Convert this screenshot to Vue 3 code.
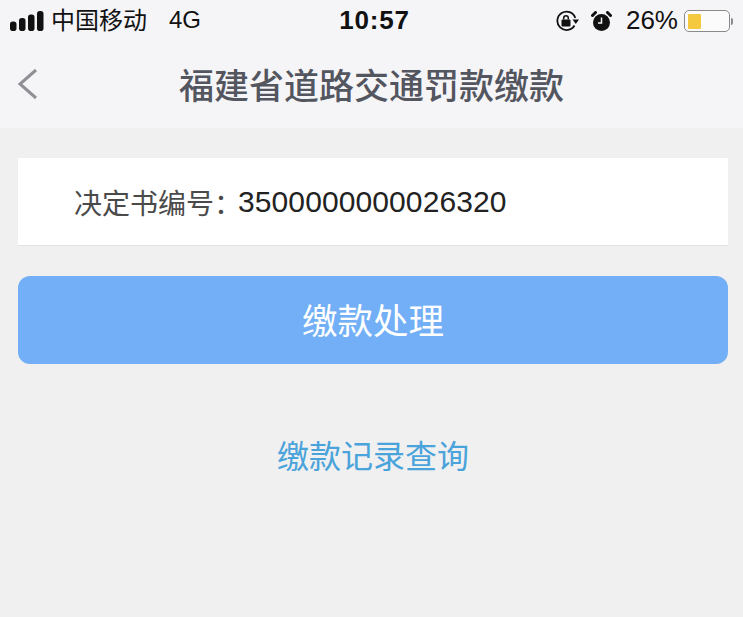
<template>
  <div class="page">
    <header class="top">
      <div class="status">
        <div class="status-left">
          <svg class="signal" width="34" height="20" viewBox="0 0 34 20">
            <rect x="0" y="10.500" width="6.500" height="9.500" rx="2.800" fill="#111" />
            <rect x="9" y="7" width="6.500" height="13" rx="2.800" fill="#111" />
            <rect x="18" y="3.500" width="6.500" height="16.500" rx="2.800" fill="#111" />
            <rect x="27" y="0" width="6.500" height="20" rx="2.800" fill="#111" />
          </svg>
          <span class="carrier">中国移动</span>
          <span class="net">4G</span>
        </div>
        <div class="clock">10:57</div>
        <div class="status-right">
          <svg class="lock" width="24" height="22" viewBox="0 0 24 22">
            <path d="M18.500 15.500A9.200 9.200 0 1 1 19.300 8" fill="none" stroke="#111" stroke-width="1.800" />
            <path d="M16.500 9.500h6.500l-3.200 4.500z" fill="#111" />
            <rect x="5.500" y="9.500" width="9" height="7" rx="1" fill="#111" />
            <path d="M7.700 9.500V8a2.300 2.300 0 0 1 4.600 0v1.500" fill="none" stroke="#111" stroke-width="1.500" />
          </svg>
          <svg class="alarm" width="21" height="21" viewBox="0 0 21 21">
            <circle cx="10.500" cy="11.500" r="8.500" fill="#111" />
            <path d="M10.500 6.500v5.500H7" fill="none" stroke="#f5f5f8" stroke-width="1.500" />
            <path d="M1.500 4.500 4.500 1.500M19.500 4.500 16.500 1.500" stroke="#111" stroke-width="3" stroke-linecap="round" />
          </svg>
          <span class="pct">26%</span>
          <div class="battery">
            <div class="battery-body"><div class="battery-fill"></div></div>
            <div class="battery-tip"></div>
          </div>
        </div>
      </div>
      <div class="nav">
        <svg class="back" width="22" height="32" viewBox="0 0 22 32">
          <path d="M19 2 3 16l16 14" fill="none" stroke="#8f9094" stroke-width="3" />
        </svg>
        <h1 class="title">福建省道路交通罚款缴款</h1>
      </div>
    </header>
    <main class="content">
      <div class="field">
        <span class="label">决定书编号：</span><span class="value">3500000000026320</span>
      </div>
      <button class="pay">缴款处理</button>
      <a class="records">缴款记录查询</a>
    </main>
  </div>
</template>

<script setup>
</script>

<style>
html, body { margin: 0; background: #efeff0; }
</style>

<style scoped>
.page {
  width: 743px;
  height: 617px;
  overflow: hidden;
  background: #f0f0f1;
  font-family: "Liberation Sans", "Noto Sans CJK SC", sans-serif;
}
.top { height: 128px; background: #f5f5f8; }
.status {
  height: 42px;
  display: grid;
  grid-template-columns: 1fr auto 1fr;
  align-items: center;
  color: #111;
}
.status-left { display: flex; align-items: center; padding-left: 10px; }
.signal { margin-right: 7px; }
.carrier { font-size: 24px; line-height: 38px; }
.net { font-size: 24px; margin-left: 22px; padding-bottom: 2px; }
.clock { font-size: 26px; font-weight: 700; letter-spacing: 0.8px; margin-left: 6px; padding-bottom: 2px; }
.status-right { display: flex; align-items: center; justify-content: flex-end; padding-right: 10px; }
.lock { margin-right: 11px; }
.alarm { margin-right: 14px; }
.pct { font-size: 26px; margin-right: 6px; padding-bottom: 2px; }
.battery { display: flex; align-items: center; }
.battery-body {
  width: 46px;
  height: 22px;
  box-sizing: border-box;
  border: 1.5px solid #8a8a8a;
  border-radius: 5px;
  padding: 2.500px;
  background: #fbfbfb;
}
.battery-fill { width: 13px; height: 100%; background: #f5c93f; border-radius: 1px; }
.battery-tip { width: 2px; height: 7px; background: #8a8a8a; border-radius: 0 2px 2px 0; margin-left: 1px; }
.nav {
  height: 86px;
  box-sizing: border-box;
  padding-bottom: 4px;
  display: flex;
  align-items: center;
  justify-content: center;
  position: relative;
}
.back { position: absolute; left: 17px; top: 26px; }
.title {
  margin: 0;
  font-size: 35px;
  font-weight: 500;
  color: #53555f;
  letter-spacing: 0;
}
.content { display: flex; flex-direction: column; align-items: center; padding: 30px 15px 0 18px; }
.field {
  align-self: stretch;
  height: 88px;
  box-sizing: border-box;
  background: #fff;
  border-bottom: 1px solid #e2e2e2;
  padding-left: 56px;
  display: flex;
  align-items: center;
  font-size: 28px;
}
.label { color: #4a4a4a; margin-right: -4px; }
.value { color: #222; font-size: 30px; letter-spacing: 0.1px; }
.pay {
  align-self: stretch;
  height: 88px;
  margin-top: 30px;
  border: 0;
  border-radius: 12px;
  background: #72aff6;
  color: #fff;
  font: inherit;
  font-size: 35.500px;
  padding: 0 0 4px;
}
.records {
  margin-top: 70px;
  font-size: 32px;
  color: #4aa3da;
  line-height: 46px;
}
</style>
